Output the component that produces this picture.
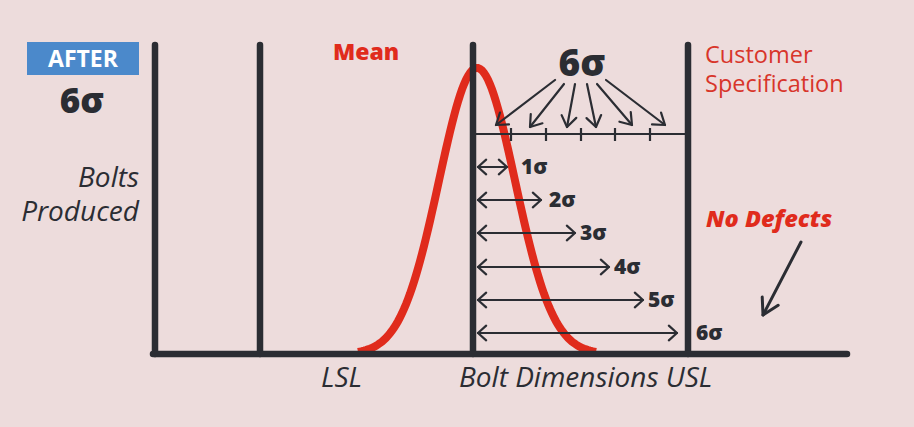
import React from "react";

const DARK = "#2b2d33";
const RED = "#e02b1c";

function head(x1: number, y1: number, x2: number, y2: number, len = 11, ang = 38) {
  const a = Math.atan2(y2 - y1, x2 - x1);
  const r = (ang * Math.PI) / 180;
  const p1 = [x2 - len * Math.cos(a - r), y2 - len * Math.sin(a - r)];
  const p2 = [x2 - len * Math.cos(a + r), y2 - len * Math.sin(a + r)];
  return `${p1[0]},${p1[1]} ${x2},${y2} ${p2[0]},${p2[1]}`;
}

function Arrow({ x1, y1, x2, y2, both = false, len = 11, ang = 38, w = 2.2 }: { x1: number; y1: number; x2: number; y2: number; both?: boolean; len?: number; ang?: number; w?: number }) {
  return (
    <g stroke={DARK} strokeWidth={w} fill="none" strokeLinecap="round" strokeLinejoin="round">
      <line x1={x1} y1={y1} x2={x2} y2={y2} />
      <polyline points={head(x1, y1, x2, y2, len, ang)} />
      {both && <polyline points={head(x2, y2, x1, y1, len, ang)} />}
    </g>
  );
}

function bellPath() {
  const c = 477;
  const s = 38;
  const base = 352;
  const amp = 284;
  const g = (d: number) => Math.exp(-(d * d) / (2 * s * s));
  const g0 = g(119);
  const pts: string[] = [];
  for (let x = c - 119; x <= c + 119; x += 2) {
    const y = base - (amp * (g(x - c) - g0)) / (1 - g0);
    pts.push(`${x.toFixed(1)},${y.toFixed(1)}`);
  }
  return "M" + pts.join(" L");
}

export default function App() {
  const rows = [
    { y: 167, x2: 507, lx: 521, label: "1σ" },
    { y: 200, x2: 541, lx: 549, label: "2σ" },
    { y: 233, x2: 575, lx: 580, label: "3σ" },
    { y: 267, x2: 609, lx: 614, label: "4σ" },
    { y: 300, x2: 643, lx: 648, label: "5σ" },
    { y: 333, x2: 677, lx: 696, label: "6σ" },
  ];
  const fan = [
    [555, 80, 496, 125],
    [564, 84, 530, 127],
    [575, 84, 567, 127],
    [587, 84, 596, 127],
    [597, 84, 632, 125],
    [606, 80, 665, 125],
  ];
  const ticks = [511, 546, 581, 615, 650];
  return (
    <div className="w-[914px] h-[427px] bg-[#eddcdc] overflow-hidden" style={{ fontFamily: '"Open Sans", sans-serif' }}>
      <svg width="914" height="427" viewBox="0 0 914 427" className="block">
        {/* AFTER badge */}
        <rect x="27" y="42" width="112" height="33" fill="#4b89cb" />
        <text x="83" y="67" textAnchor="middle" fill="#ffffff" fontSize="23" fontWeight="700">AFTER</text>
        <text x="82" y="113" textAnchor="middle" fill={DARK} fontSize="35" fontWeight="800">6σ</text>

        {/* Y label */}
        <text x="139" y="187" textAnchor="end" fill={DARK} fontSize="28" fontStyle="italic" fontWeight="400">Bolts</text>
        <text x="139" y="221" textAnchor="end" fill={DARK} fontSize="28" fontStyle="italic" fontWeight="400">Produced</text>

        {/* Mean */}
        <text x="333" y="60" fill={RED} fontSize="23" fontWeight="800">Mean</text>

        {/* Customer Specification */}
        <text x="705" y="63" fill="#d8352a" fontSize="23.5" fontWeight="400">Customer</text>
        <text x="705" y="92" fill="#d8352a" fontSize="23.5" fontWeight="400">Specification</text>

        {/* No Defects */}
        <text x="706" y="227" fill={RED} fontSize="23.5" fontWeight="800" fontStyle="italic">No Defects</text>
        <Arrow x1={801} y1={242} x2={763} y2={315} len={18} ang={30} w={3} />

        {/* bell curve */}
        <path d={bellPath()} stroke={RED} strokeWidth="8" fill="none" strokeLinecap="butt" />

        {/* axes and vertical lines */}
        <g stroke={DARK} strokeWidth="6.5" strokeLinecap="round">
          <line x1="155" y1="45" x2="155" y2="354" />
          <line x1="260" y1="45" x2="260" y2="354" />
          <line x1="473" y1="45" x2="473" y2="354" />
          <line x1="688" y1="45" x2="688" y2="354" />
          <line x1="153" y1="354" x2="847" y2="354" />
        </g>

        {/* 6σ top label and fan arrows */}
        <text x="582" y="76" textAnchor="middle" fill={DARK} fontSize="37" fontWeight="800">6σ</text>
        {fan.map(([a, b, c, d], i) => (
          <Arrow key={i} x1={a} y1={b} x2={c} y2={d} len={13} ang={35} />
        ))}
        <line x1="473" y1="134" x2="688" y2="134" stroke={DARK} strokeWidth="2.2" />
        {ticks.map((t) => (
          <line key={t} x1={t} y1="128" x2={t} y2="141" stroke={DARK} strokeWidth="2.2" />
        ))}

        {/* sigma rows */}
        {rows.map((r) => (
          <g key={r.label}>
            <Arrow x1={478} y1={r.y} x2={r.x2} y2={r.y} both len={11} ang={42} />
            <text x={r.lx} y={r.y + 7} fill={DARK} fontSize="21" fontWeight="800">{r.label}</text>
          </g>
        ))}

        {/* X labels */}
        <text x="321" y="387" fill={DARK} fontSize="28" fontStyle="italic" fontWeight="400">LSL</text>
        <text x="459" y="387" fill={DARK} fontSize="28" fontStyle="italic" fontWeight="400">Bolt Dimensions USL</text>
      </svg>
    </div>
  );
}
